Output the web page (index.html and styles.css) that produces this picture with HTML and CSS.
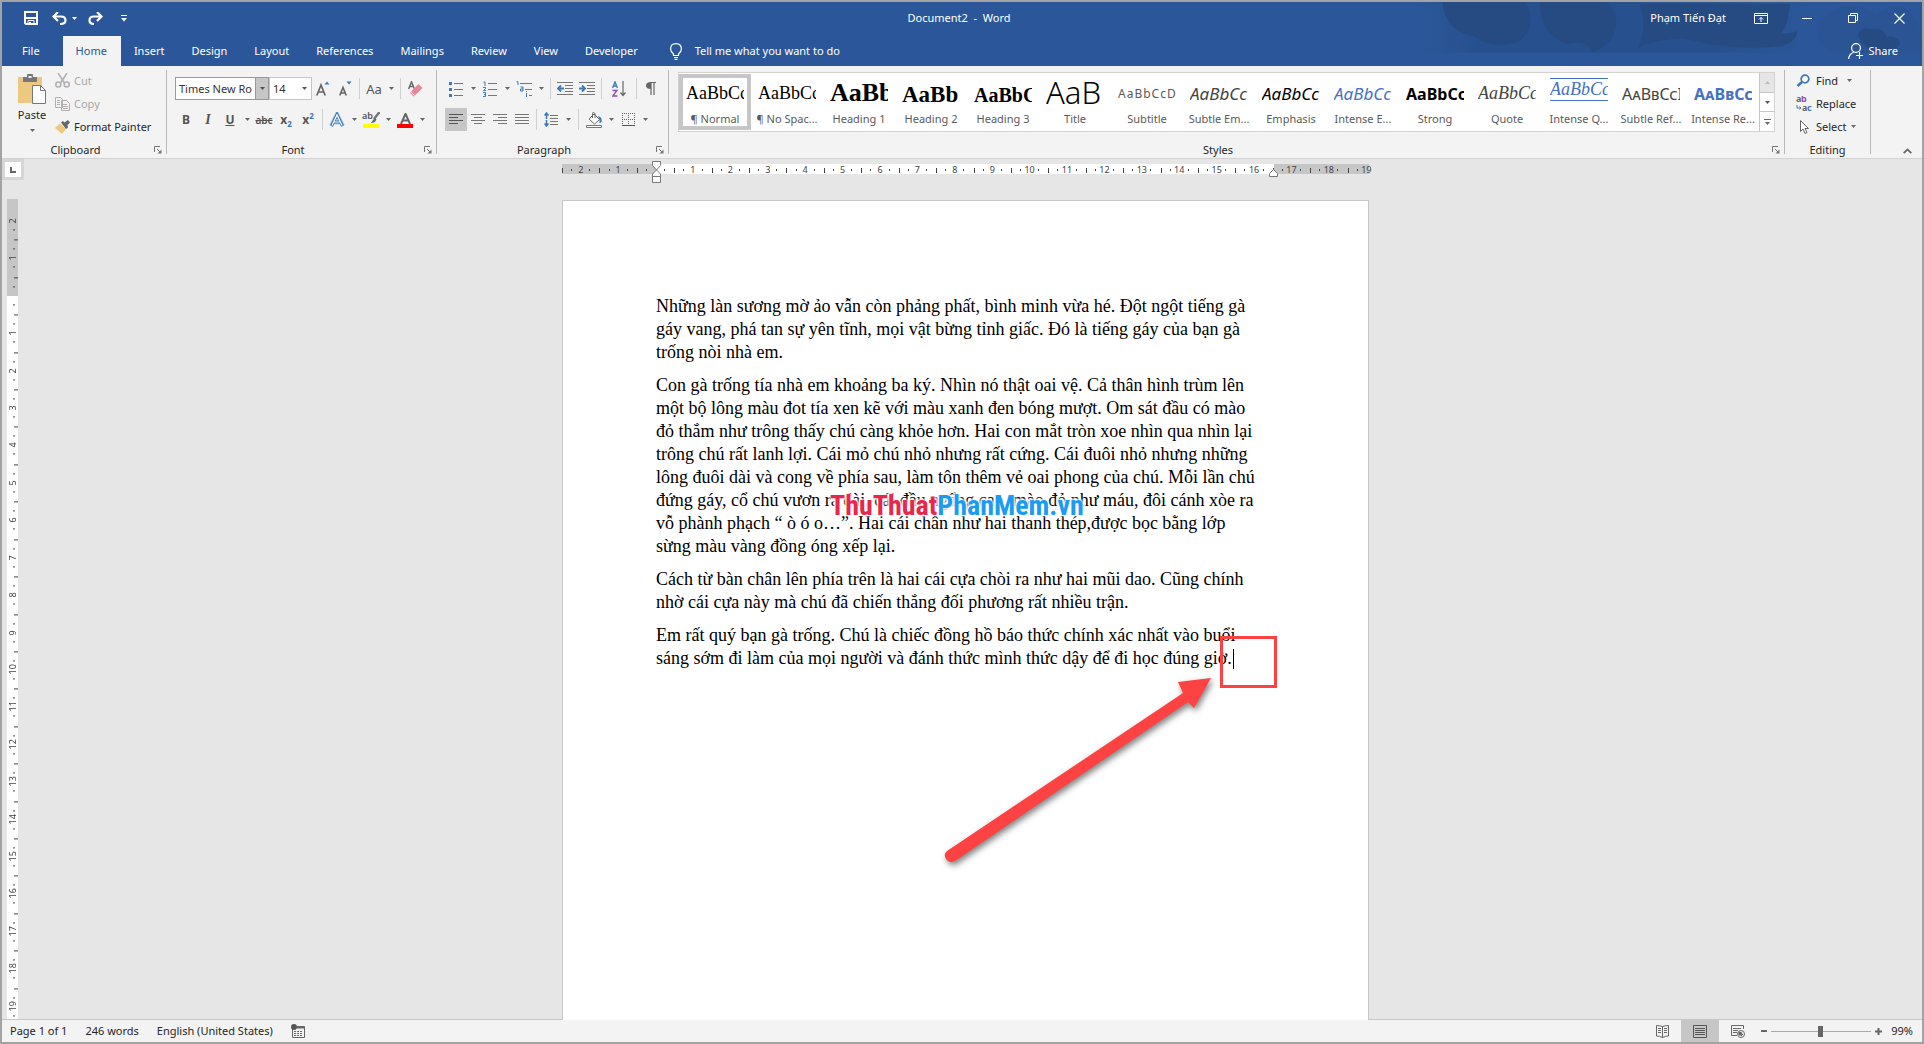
FILE: index.html
```html
<!DOCTYPE html>
<html lang="en">
<head>
<meta charset="utf-8">
<title>Document2 - Word</title>
<link rel="stylesheet" href="styles.css">
</head>
<body>
<svg class="defs" aria-hidden="true">
  <symbol id="caret" viewBox="0 0 5 3"><path d="M0 0h5L2.5 3z" fill="currentColor"/></symbol>
  <symbol id="launch" viewBox="0 0 8 8"><path d="M.5 6V.5H6" fill="none" stroke="#777"/><path d="M3 3l3 3" stroke="#777"/><path d="M7.500 3.500v4h-4z" fill="#777"/></symbol>
</svg>
<div class="window">
  <header class="top">
    <svg class="clouds" viewBox="0 0 524 51" aria-hidden="true">
      <defs><linearGradient id="fade"><stop offset="0" stop-color="#27508e" stop-opacity="0"/><stop offset=".15" stop-color="#27508e"/><stop offset=".75" stop-color="#27508e"/><stop offset="1" stop-color="#27508e" stop-opacity="0"/></linearGradient></defs>
      <path d="M20 0h390v51H20z" fill="url(#fade)"/>
      <g fill="#264a82">
        <path d="M44 0h84q12 26-8 40q-26 8-44-6q-28-4-32-34z"/>
        <path d="M142 0h66q14 10 9 28q-5 17-23 22q-6-14-24-8q-28-8-28-42z"/>
        <path d="M242 2h150q-2 24-10 30q10 0 17-3q2 8-14 15q-50 6-100-8q-30 2-45 10q10-20 2-44z"/>
      </g>
      <path d="M432 10q24-14 46 4q18-16 34-4q12 12 12 41h-92q-26-24 0-41z" fill="#2a5494"/>
      <path d="M474 49q-14-8-14-17q4-8 14-5q12-2 15 8q10-2 13 6q-4 12-28 8z" fill="#264a82"/>
    </svg>
    <div class="titlebar">
      <div class="quick">
        <button aria-label="Save"><svg width="14" height="14" viewBox="0 0 14 14"><path d="M1 1h12v12H2l-1-1z" fill="none" stroke="#fff" stroke-width="2"/><path d="M2 7h10" stroke="#fff" stroke-width="2"/><path d="M4 13V9.500h6V13" fill="none" stroke="#fff"/><path d="M5 11h2v2H5z" fill="#fff"/></svg></button>
        <button aria-label="Undo"><svg width="15" height="13" viewBox="0 0 15 13"><path d="M6 0L1.500 4.500L6 9M2 4.500h7q4.500 0 4.500 4q0 3.500-5.500 3.500" fill="none" stroke="#fff" stroke-width="2.200"/></svg></button>
        <button class="arrow" aria-label="Undo list"><svg width="5" height="3"><use href="#caret"/></svg></button>
        <button aria-label="Redo"><svg width="15" height="13" viewBox="0 0 15 13"><path d="M9 0l4.500 4.500L9 9M13 4.500H6Q1.500 4.500 1.500 8.500Q1.500 12 6 12" fill="none" stroke="#fff" stroke-width="2.200"/></svg></button>
        <button aria-label="Customize Quick Access Toolbar"><svg width="6" height="7" viewBox="0 0 6 7"><path d="M0 .5h6" stroke="#fff"/><path d="M0 3h6L3 6.500z" fill="#fff"/></svg></button>
      </div>
      <h1 class="caption">Document2&nbsp; -&nbsp; Word</h1>
      <div class="controls">
        <span class="user">Phạm Tiến Đạt</span>
        <button aria-label="Ribbon Display Options"><svg width="14" height="11" viewBox="0 0 14 11"><path d="M.5.500h13v10H.5zM.5 2.500h13M7 9V4.500M5 6.500L7 4.500L9 6.500" fill="none" stroke="#fff"/></svg></button>
        <button aria-label="Minimize"><svg width="10" height="10" viewBox="0 0 10 10"><path d="M0 5.500h10" stroke="#fff"/></svg></button>
        <button aria-label="Restore"><svg width="10" height="10" viewBox="0 0 10 10"><path d="M.5 2.500h7v7h-7zM2.500 2.500v-2h7v7h-2" fill="none" stroke="#fff"/></svg></button>
        <button aria-label="Close"><svg width="11" height="11" viewBox="0 0 11 11"><path d="M.5.500l10 10M10.500.500l-10 10" stroke="#fff" stroke-width="1.200"/></svg></button>
      </div>
    </div>
    <nav class="tabs">
      <a class="file" href="#">File</a>
      <a class="active" href="#">Home</a>
      <a href="#">Insert</a>
      <a href="#">Design</a>
      <a href="#">Layout</a>
      <a href="#">References</a>
      <a href="#">Mailings</a>
      <a href="#">Review</a>
      <a href="#">View</a>
      <a href="#">Developer</a>
      <button class="tell"><svg width="12" height="17" viewBox="0 0 12 17"><path d="M3.500 12.500V11Q.600 8.800.600 6Q.600.600 6 .600T11.400 6Q11.400 8.800 8.500 11v1.500zM4 14.500h4M4.500 16.300h3" fill="none" stroke="#fff" stroke-width="1.200"/></svg>Tell me what you want to do</button>
      <button class="share"><svg width="15" height="17" viewBox="0 0 15 17"><circle cx="8" cy="5" r="4.400" fill="none" stroke="#fff" stroke-width="1.200"/><path d="M.6 16q.4-5 5-6.800M11.500 9v7M8 12.500h7" fill="none" stroke="#fff" stroke-width="1.200"/></svg>Share</button>
    </nav>
  </header>

  <div class="ribbon">
    <section class="group">
      <div class="body clip">
        <button class="paste">
          <svg width="28" height="31" viewBox="0 0 28 31"><path d="M0 3h24v26H0z" fill="#ecc880"/><path d="M5 3h4V1q0-1 1-1h4q1 0 1 1v2h4v5H5z" fill="#777"/><path d="M10.500 2h3v2h-3z" fill="#f3f3f3"/><path d="M14.500 11.500h8l5 5v13h-13z" fill="#fff" stroke="#777"/><path d="M22.500 11.500v5h5" fill="none" stroke="#777"/></svg>
          <span>Paste</span>
          <svg width="5" height="3"><use href="#caret"/></svg>
        </button>
        <div class="rows">
          <button class="off"><svg width="15" height="15" viewBox="0 0 15 15"><g fill="none" stroke="#b3afb3" stroke-width="1.600"><path d="M3 0l6.500 10M12 0L5.500 10"/><circle cx="3.300" cy="11.500" r="2.500"/><circle cx="11.700" cy="11.500" r="2.500"/></g></svg>Cut</button>
          <button class="off"><svg width="15" height="14" viewBox="0 0 15 14"><path d="M.5.500h5l2 2v8h-7z M6.500 3.500h5l3 3v7h-8z" fill="#f3f3f3" stroke="#b3afb3"/><path d="M2 3.500h3M2 5.500h3M2 7.500h3M8 7.500h4M8 9.500h5M8 11.500h5" stroke="#b3afb3"/></svg>Copy</button>
          <button><svg width="15" height="14" viewBox="0 0 15 14"><path d="M5 3.500l6 5.500l-4 5L0 8z" fill="#ecc880"/><path d="M6 2.500l2-1.500l1.500 1.500L13 0l2 2.500L12.500 5L13 7.500l-2 1.500z" fill="#666"/></svg>Format Painter</button>
        </div>
      </div>
      <div class="label"><span>Clipboard</span><button aria-label="Clipboard settings"><svg width="8" height="8"><use href="#launch"/></svg></button></div>
    </section>

    <section class="group">
      <div class="body stack">
        <div class="tools">
          <div class="combo name"><input type="text" value="Times New Ro" aria-label="Font"><button aria-label="Font list"><svg width="5" height="3"><use href="#caret"/></svg></button></div>
          <div class="combo size"><input type="text" value="14" aria-label="Font size"><button aria-label="Size list"><svg width="5" height="3"><use href="#caret"/></svg></button></div>
          <button class="t" aria-label="Grow font"><svg width="14" height="16" viewBox="0 0 14 16"><path d="M.8 14.500L5 4l4.200 10.500M2.300 11h5.500" fill="none" stroke="#666" stroke-width="1.700"/><path d="M8.500 3.500h5L11 .5z" fill="#3e79b5"/></svg></button>
          <button class="t" aria-label="Shrink font"><svg width="14" height="16" viewBox="0 0 14 16"><path d="M1.800 14.500L5 6.500l3.200 8M2.800 12h4.400" fill="none" stroke="#666" stroke-width="1.600"/><path d="M8.500.500h5L11 3.500z" fill="#3e79b5"/></svg></button>
          <i class="sep"></i>
          <button class="t case" aria-label="Change case">Aa</button><button class="arrow" aria-label="Case options"><svg width="5" height="3"><use href="#caret"/></svg></button>
          <i class="sep"></i>
          <button class="t" aria-label="Clear formatting"><svg width="15" height="16" viewBox="0 0 15 16"><path d="M.6 8L3.500.800L6.400 8M1.600 5.500h3.800" fill="none" stroke="#666" stroke-width="1.400"/><path d="M10.500 3l4 4L7 14.500l-4-4z" fill="#e8899b"/><path d="M2.500 11l4 4-1 .5L2 12z" fill="#e8899b"/></svg></button>
        </div>
        <div class="tools">
          <button class="t"><b>B</b></button>
          <button class="t ital"><i>I</i></button>
          <button class="t under"><u>U</u></button>
          <button class="arrow" aria-label="Underline styles"><svg width="5" height="3"><use href="#caret"/></svg></button>
          <button class="t strike"><s>abc</s></button>
          <button class="t script"><b>x</b><sub>2</sub></button>
          <button class="t script"><b>x</b><sup>2</sup></button>
          <i class="sep"></i>
          <button class="t" aria-label="Text effects"><svg width="16" height="16" viewBox="0 0 16 16"><path d="M2 14L8 2l6 12M4.500 10.500h7" fill="none" stroke="#a9c8e6" stroke-width="4"/><path d="M2.500 14L8 2.500L13.500 14M5 10h6" fill="none" stroke="#3e79b5" stroke-width="3"/><path d="M3 13.500L8 3l5 10.500M5 10h6" fill="none" stroke="#fff" stroke-width="1.200"/></svg></button>
          <button class="arrow" aria-label="Effects list"><svg width="5" height="3"><use href="#caret"/></svg></button>
          <button class="t bar yellow" aria-label="Highlight"><span class="ab">ab</span><svg width="9" height="12" viewBox="0 0 9 12"><path d="M8.500 0L3 7" stroke="#777" stroke-width="2.400"/><path d="M3.500 6l2 1.500Q4 11 0 11z" fill="#666"/></svg></button>
          <button class="arrow" aria-label="Highlight colours"><svg width="5" height="3"><use href="#caret"/></svg></button>
          <button class="t bar red" aria-label="Font colour"><svg width="11" height="11" viewBox="0 0 11 11"><path d="M1 11L5.500.800L10 11M2.800 7.500h5.400" fill="none" stroke="#666" stroke-width="2"/></svg></button>
          <button class="arrow" aria-label="Font colours"><svg width="5" height="3"><use href="#caret"/></svg></button>
        </div>
      </div>
      <div class="label"><span>Font</span><button aria-label="Font settings"><svg width="8" height="8"><use href="#launch"/></svg></button></div>
    </section>

    <section class="group">
      <div class="body stack tight">
        <div class="tools">
          <button class="t" aria-label="Bullets"><svg width="14" height="16" viewBox="0 0 14 16"><path d="M0 1h3v3H0zM0 7h3v3H0zM0 13h3v3H0z" fill="#3e79b5"/><path d="M5 2.500h9M5 8.500h9M5 14.500h9" stroke="#777"/></svg></button>
          <button class="arrow" aria-label="Bullet styles"><svg width="5" height="3"><use href="#caret"/></svg></button>
          <button class="t" aria-label="Numbering"><svg width="14" height="16" viewBox="0 0 14 16"><path d="M.5 1H2v4M0 6.500h2.500v1.200L.5 9.500h2.500M0 11.500h2.500v4H0M1 13.500h1.500" fill="none" stroke="#3e79b5"/><path d="M5 2.500h9M5 8.500h9M5 14.500h9" stroke="#777"/></svg></button>
          <button class="arrow" aria-label="Number styles"><svg width="5" height="3"><use href="#caret"/></svg></button>
          <button class="t" aria-label="Multilevel list"><svg width="16" height="16" viewBox="0 0 16 16"><path d="M.5.800H2V4M4.500 6H7v4H4.500V8H7M10.500 12v4M10.500 10v1" fill="none" stroke="#3e79b5"/><path d="M4 2.500h12M9 8.500h7M13 14.500h3" stroke="#777"/></svg></button>
          <button class="arrow" aria-label="List levels"><svg width="5" height="3"><use href="#caret"/></svg></button>
          <i class="sep"></i>
          <button class="t" aria-label="Decrease indent"><svg width="16" height="14" viewBox="0 0 16 14"><path d="M0 .5h16M8 3.500h8M8 6.500h8M8 9.500h8M0 12.500h16" stroke="#777"/><path d="M7 6.500H1M4 3.500L1 6.500l3 3" fill="none" stroke="#3e79b5" stroke-width="1.800"/></svg></button>
          <button class="t" aria-label="Increase indent"><svg width="16" height="14" viewBox="0 0 16 14"><path d="M0 .5h16M8 3.500h8M8 6.500h8M8 9.500h8M0 12.500h16" stroke="#777"/><path d="M0 6.500h6M3 3.500l3 3-3 3" fill="none" stroke="#3e79b5" stroke-width="1.800"/></svg></button>
          <i class="sep"></i>
          <button class="t wide" aria-label="Sort"><svg width="14" height="16" viewBox="0 0 14 16"><path d="M.6 7L3 .800L5.400 7M1.500 5h3" fill="none" stroke="#3e79b5" stroke-width="1.300"/><path d="M.5 9.500h4.500L.8 15h4.600" fill="none" stroke="#8a4fb0" stroke-width="1.300"/><path d="M11 0v14M8.500 11.500L11 14.500l2.500-3" fill="none" stroke="#666" stroke-width="1.200"/></svg></button>
          <i class="sep"></i>
          <button class="t" aria-label="Show paragraph marks"><svg width="10" height="13" viewBox="0 0 10 13"><path d="M4 .5h6M5 1v12M8 1v12" fill="none" stroke="#666" stroke-width="1.200"/><path d="M5 0v7Q0 7 0 3.500T5 0z" fill="#666"/></svg></button>
        </div>
        <div class="tools">
          <button class="t on" aria-label="Align left"><svg width="14" height="11" viewBox="0 0 14 11"><path d="M0 .5h14M0 3.500h9M0 6.500h14M0 9.500h9" stroke="#555"/></svg></button>
          <button class="t" aria-label="Centre"><svg width="14" height="11" viewBox="0 0 14 11"><path d="M0 .5h14M3 3.500h8M0 6.500h14M3 9.500h8" stroke="#777"/></svg></button>
          <button class="t" aria-label="Align right"><svg width="14" height="11" viewBox="0 0 14 11"><path d="M0 .5h14M5 3.500h9M0 6.500h14M5 9.500h9" stroke="#777"/></svg></button>
          <button class="t" aria-label="Justify"><svg width="14" height="11" viewBox="0 0 14 11"><path d="M0 .5h14M0 3.500h14M0 6.500h14M0 9.500h14" stroke="#777"/></svg></button>
          <i class="sep"></i>
          <button class="t" aria-label="Line spacing"><svg width="14" height="15" viewBox="0 0 14 15"><path d="M2.500 1v13M.5 3.500l2-2.500 2 2.500M.5 11.500l2 2.500 2-2.500" fill="none" stroke="#3e79b5" stroke-width="1.500"/><path d="M0 7.500h5" stroke="#f3f3f3"/><path d="M6 3.500h8M6 6.500h8M6 9.500h8M6 12.500h8" stroke="#777"/></svg></button>
          <button class="arrow" aria-label="Spacing options"><svg width="5" height="3"><use href="#caret"/></svg></button>
          <i class="sep end"></i>
          <button class="t" aria-label="Shading"><svg width="17" height="16" viewBox="0 0 17 16"><path d="M8 2l5.500 5.500L8.500 12L3 7z" fill="#fff" stroke="#666"/><path d="M6.500 6V1.500Q6.500.500 7.500.500T9 2v4" fill="none" stroke="#666"/><path d="M12 4q4.500 1 3.500 6l-2 1.500V7.500z" fill="#3e79b5"/><path d="M.5 13.500h15v2H.5z" fill="#fff" stroke="#777"/></svg></button>
          <button class="arrow" aria-label="Shading colours"><svg width="5" height="3"><use href="#caret"/></svg></button>
          <button class="t" aria-label="Borders"><svg width="13" height="13" viewBox="0 0 13 13"><path d="M.5 0v12M6.500 0v12M12.500 0v12M0 .5h13M0 6.500h13" fill="none" stroke="#666" stroke-dasharray="1 1"/><path d="M0 12.500h13" stroke="#555"/></svg></button>
          <button class="arrow" aria-label="Border styles"><svg width="5" height="3"><use href="#caret"/></svg></button>
        </div>
      </div>
      <div class="label"><span>Paragraph</span><button aria-label="Paragraph settings"><svg width="8" height="8"><use href="#launch"/></svg></button></div>
    </section>

    <section class="group styles">
      <div class="body">
        <div class="gallery">
          <button class="style on"><span class="p serif">AaBbCc</span><span>¶ Normal</span></button>
          <button class="style"><span class="p serif">AaBbCc</span><span>¶ No Spac...</span></button>
          <button class="style"><span class="p serif h1">AaBb</span><span>Heading 1</span></button>
          <button class="style"><span class="p serif h2">AaBb</span><span>Heading 2</span></button>
          <button class="style"><span class="p serif h3">AaBbC</span><span>Heading 3</span></button>
          <button class="style"><span class="p title">AaB</span><span>Title</span></button>
          <button class="style"><span class="p subtitle">AaBbCcD</span><span>Subtitle</span></button>
          <button class="style"><span class="p em grey">AaBbCc</span><span>Subtle Em...</span></button>
          <button class="style"><span class="p em">AaBbCc</span><span>Emphasis</span></button>
          <button class="style"><span class="p em blue">AaBbCc</span><span>Intense E...</span></button>
          <button class="style"><span class="p strong">AaBbCc</span><span>Strong</span></button>
          <button class="style"><span class="p serif quote grey">AaBbCc</span><span>Quote</span></button>
          <button class="style"><span class="p serif quote blue lined">AaBbCc</span><span>Intense Q...</span></button>
          <button class="style"><span class="p caps grey">AaBbCcI</span><span>Subtle Ref...</span></button>
          <button class="style"><span class="p caps blue heavy">AaBbCc</span><span>Intense Re...</span></button>
          <div class="scroll">
            <button class="dim" aria-label="Previous styles"><svg width="5" height="3" viewBox="0 0 5 3"><path d="M0 3h5L2.500 0z" fill="#bbb"/></svg></button>
            <button aria-label="Next styles"><svg width="5" height="3"><use href="#caret"/></svg></button>
            <button aria-label="All styles"><svg width="7" height="6" viewBox="0 0 7 6"><path d="M0 .5h7" stroke="#666"/><path d="M1 3h5L3.500 6z" fill="#666"/></svg></button>
          </div>
        </div>
      </div>
      <div class="label"><span>Styles</span><button aria-label="Styles pane"><svg width="8" height="8"><use href="#launch"/></svg></button></div>
    </section>

    <section class="group editing">
      <div class="body rows">
        <button><svg width="16" height="13" viewBox="0 0 16 13"><circle cx="9" cy="5" r="3.800" fill="#fff" stroke="#3e79b5" stroke-width="1.800"/><path d="M6 8l-4.500 4" stroke="#3e79b5" stroke-width="2.500"/></svg>Find <svg class="gap" width="5" height="3"><use href="#caret"/></svg></button>
        <button><svg class="swap" width="16" height="15" viewBox="0 0 16 15"><g font-size="9" font-weight="700"><text x="0" y="6" fill="#666">a</text><text x="5" y="6" fill="#8a4fb0">b</text><text x="6" y="15" fill="#666">a</text><text x="11" y="15" fill="#3e79b5">c</text></g><path d="M1 9v3h4M3.500 10.500L5 12l-1.500 1.500" fill="none" stroke="#3e79b5"/></svg>Replace</button>
        <button><svg width="16" height="14" viewBox="0 0 16 14"><path d="M4.500.500v11l2.500-2.500 2 4.500 2-1-2-4h3.500z" fill="#fff" stroke="#666"/></svg>Select<svg width="5" height="3"><use href="#caret"/></svg></button>
      </div>
      <div class="label"><span>Editing</span></div>
    </section>
    <button class="collapse" aria-label="Collapse the ribbon"><svg width="9" height="6" viewBox="0 0 9 6"><path d="M.7 5.200L4.500 1.400l3.800 3.800" fill="none" stroke="#666" stroke-width="1.800"/></svg></button>
  </div>

  <main class="work">
    <div class="side">
      <button class="tabstop" aria-label="Tab selector"><svg width="6" height="6" viewBox="0 0 6 6"><path d="M1 0v5h5" fill="none" stroke="#666" stroke-width="2"/></svg></button>
      <div class="vruler"><div class="scale">
        <span>2</span><span>1</span><span></span><span>1</span><span>2</span><span>3</span><span>4</span><span>5</span><span>6</span><span>7</span><span>8</span><span>9</span><span>10</span><span>11</span><span>12</span><span>13</span><span>14</span><span>15</span><span>16</span><span>17</span><span>18</span><span>19</span>
      </div></div>
    </div>
    <div class="canvas">
      <div class="hruler"><div class="scale">
        <span>2</span><span>1</span><span></span><span>1</span><span>2</span><span>3</span><span>4</span><span>5</span><span>6</span><span>7</span><span>8</span><span>9</span><span>10</span><span>11</span><span>12</span><span>13</span><span>14</span><span>15</span><span>16</span><span>17</span><span>18</span><span>19</span>
      </div>
        <svg class="mark left" width="9" height="22" viewBox="0 0 9 22"><path d="M.5.500h8v4L4.500 9l4 4v2.500h-8V13l4-4L.5 4.500zM.5 15.500h8v6h-8z" fill="#fff" stroke="#777"/></svg>
        <svg class="mark right" width="9" height="8" viewBox="0 0 9 8"><path d="M.5 7.500V4.500l4-4 4 4v3z" fill="#fff" stroke="#777"/></svg>
      </div>
      <article class="page" lang="vi">
        <p>Những làn sương mờ ảo vẫn còn phảng phất, bình minh vừa hé. Đột ngột tiếng gà<br>gáy vang, phá tan sự yên tĩnh, mọi vật bừng tỉnh giấc. Đó là tiếng gáy của bạn gà<br>trống nòi nhà em.</p>
        <p>Con gà trống tía nhà em khoảng ba ký. Nhìn nó thật oai vệ. Cả thân hình trùm lên<br>một bộ lông màu đot tía xen kẽ với màu xanh đen bóng mượt. Om sát đầu có mào<br>đỏ thắm như trông thấy chú càng khỏe hơn. Hai con mắt tròn xoe nhìn qua nhìn lại<br>trông chú rất lanh lợi. Cái mỏ chú nhỏ nhưng rất cứng. Cái đuôi nhỏ nhưng những<br>lông đuôi dài và cong về phía sau, làm tôn thêm vẻ oai phong của chú. Mỗi lần chú<br>đứng gáy, cổ chú vươn ra dài, cái đầu ngẩng cao, mào đỏ như máu, đôi cánh xòe ra<br>vỗ phành phạch “ ò ó o…”. Hai cái chân như hai thanh thép,được bọc bằng lớp<br>sừng màu vàng đồng óng xếp lại.</p>
        <p>Cách từ bàn chân lên phía trên là hai cái cựa chòi ra như hai mũi dao. Cũng chính<br>nhờ cái cựa này mà chú đã chiến thắng đối phương rất nhiều trận.</p>
        <p>Em rất quý bạn gà trống. Chú là chiếc đồng hồ báo thức chính xác nhất vào buổi<br>sáng sớm đi làm của mọi người và đánh thức mình thức dậy để đi học đúng giờ.<span class="cursor"></span></p>
        <div class="watermark"><span>ThuThuat</span><span>PhanMem.vn</span></div>
        <div class="callout"></div>
        <svg class="pointer" width="290" height="210" viewBox="0 0 290 210" aria-hidden="true"><path d="M5 184L241 26L236 15L269 11L252 41L246 35L13 194Q7 197 4 192T5 184z" fill="#fd4243"/></svg>
      </article>
    </div>
  </main>

  <footer class="status">
    <span>Page 1 of 1</span><span>246 words</span><span>English (United States)</span>
    <svg width="14" height="14" viewBox="0 0 14 14"><path d="M1.500 5v8.500h12v-11H6" fill="none" stroke="#666"/><path d="M6 2.500h7.500v2H6z" fill="#666"/><circle cx="3" cy="3" r="3" fill="#555"/><path d="M3 7.500h9M3 9.500h9M3 11.500h9" stroke="#666" stroke-dasharray="2 1"/></svg>
    <div class="views">
      <button aria-label="Read mode"><svg width="13" height="13" viewBox="0 0 13 13"><path d="M6.500 1.500Q3.500.500.500.500v10.500q3 0 6 1.500q3-1.500 6-1.500V.500Q9.500.500 6.500 1.500zV13M2 3.500h3M2 5.500h3M2 7.500h3M8 3.500h3M8 5.500h3M8 7.500h3" fill="none" stroke="#666"/></svg></button>
      <button class="on" aria-label="Print layout"><svg width="14" height="13" viewBox="0 0 14 13"><path d="M.5.500h13v12H.5zM2 3.500h10M2 5.500h10M2 7.500h10M2 9.500h10" fill="none" stroke="#555"/></svg></button>
      <button aria-label="Web layout"><svg width="14" height="13" viewBox="0 0 14 13"><path d="M6 10.500H.5V.500h12V4M2 3.500h8M2 5.500h5M2 7.500h4" fill="none" stroke="#666"/><circle cx="10" cy="9" r="3.500" fill="#f3f3f3" stroke="#666"/><path d="M8 7l3 1-1 2-2 0zM10 11l2-2" fill="#666" stroke="#666"/></svg></button>
      <button class="zoom" aria-label="Zoom out"><svg width="6" height="6" viewBox="0 0 6 6"><path d="M0 3h6" stroke="#666" stroke-width="2"/></svg></button>
      <input type="range" min="0" max="100" value="49" aria-label="Zoom">
      <button class="zoom" aria-label="Zoom in"><svg width="7" height="7" viewBox="0 0 7 7"><path d="M0 3.500h7M3.500 0v7" stroke="#666" stroke-width="2"/></svg></button>
      <span class="percent">99%</span>
    </div>
  </footer>
</div>
</body>
</html>
```
FILE: styles.css
```css
* { box-sizing: border-box; }
body { margin: 0; font: 11px/16px "Noto Sans", "Open Sans", sans-serif; color: #262626; }
button { margin: 0; padding: 0; border: 0; background: none; font: inherit; color: inherit; display: flex; align-items: center; justify-content: center; }
svg { flex: none; display: block; }
.defs { position: absolute; width: 0; height: 0; }
.window { height: 100vh; min-height: 600px; display: flex; flex-direction: column; border: 2px solid #a3a3a3; background: #e6e6e6; overflow: hidden; }

/* Title bar and tabs */
.top { position: relative; flex: none; background: #2b579a; color: #fff; }
.clouds { position: absolute; top: 0; right: 0; width: 524px; height: 51px; }
.titlebar { position: relative; display: grid; grid-template-columns: 1fr auto 1fr; height: 34px; padding-bottom: 2px; align-items: center; }
.quick { display: flex; align-items: center; padding-left: 22px; }
.quick button { margin-right: 14px; }
.quick button:nth-child(2) { margin-right: 5px; }
.quick button:nth-child(3) { width: 5px; margin-right: 11px; }
.quick button:nth-child(4) { margin-right: 18px; }
.quick .arrow { color: #fff; }
.caption { margin: 0; padding-right: 6px; font-size: 11px; font-weight: 400; }
.controls { display: flex; justify-content: flex-end; align-items: center; }
.controls button { width: 46px; height: 30px; }
.user { margin-right: 12px; }
.tabs { position: relative; display: flex; height: 30px; }
.tabs a { display: flex; align-items: center; padding: 0 14px 0 13px; color: #fff; text-decoration: none; }
.tabs .file { padding: 0 23px 0 20px; }
.tabs .active { background: #f3f3f3; color: #2b579a; }
.tell { margin-left: 18px; gap: 13px; }
.share { margin-left: auto; margin-right: 24px; gap: 5px; }

/* Ribbon */
.ribbon { flex: none; display: flex; height: 93px; background: #f3f3f3; border-bottom: 1px solid #d2d2d2; }
.group { flex: none; display: flex; flex-direction: column; position: relative; padding-right: 1px; background: linear-gradient(#b8b8b8, #b8b8b8) no-repeat right 4px / 1px 84px; }
.body { flex: 1; display: flex; }
.label { height: 16px; display: flex; align-items: center; }
.label span { flex: 1; text-align: center; }
.label button { width: 17px; }
.clip { width: 164px; padding-left: 15px; }
.paste { width: 30px; flex-direction: column; justify-content: flex-start; padding-top: 8px; gap: 2px; }
.paste svg:last-child { margin-top: 4px; color: #666; }
.rows { display: flex; flex-direction: column; padding-top: 3px; }
.clip .rows { margin-left: 8px; }
.rows button { height: 23px; gap: 4px; justify-content: flex-start; }
.off { color: #a8a8a8; }
.stack { flex-direction: column; padding: 11px 8px 0; gap: 8px; }
.stack.tight { padding-right: 6px; }
.tools { display: flex; height: 23px; color: #555; }
.t { width: 22px; }
.t.wide { width: 28px; }
.arrow { width: 12px; color: #666; }
.sep { width: 7px; margin: 1px 0; background: linear-gradient(#d0d0d0, #d0d0d0) no-repeat center / 1px 100%; }
.sep.end { width: 9px; }
.on { background: #c6c6c6; }
.combo { display: flex; background: #fff; border: 1px solid #c6c6c6; }
.combo input { flex: 1; min-width: 0; border: 0; padding: 0 3px; background: none; font: 11px/21px "Noto Sans", sans-serif; color: #333; }
.combo button { width: 13px; color: #555; }
.name { width: 94px; border-color: #999; }
.name button { background: #c6c6c6; border-left: 1px solid #999; }
.size { width: 43px; }
.size button { width: 14px; }
.case { font-size: 13px; }
.tools b { font-size: 12px; }
.ital { font: 14px/16px "Liberation Serif", serif; font-weight: 700; }
.under { font-size: 12px; font-weight: 700; }
.strike { font-size: 10px; font-weight: 600; }
.script sub, .script sup { font-size: 8px; line-height: 8px; color: #3e79b5; font-weight: 700; }
.script sub { align-self: flex-end; padding-bottom: 3px; }
.script sup { align-self: flex-start; padding-top: 4px; }
.bar { padding-bottom: 3px; background: no-repeat center 16px / 16px 4px; }
.ab { font-size: 9px; font-weight: 600; margin-right: -2px; align-self: flex-start; }
.yellow { background-image: linear-gradient(#ff0, #ff0); }
.red { background-image: linear-gradient(#f00, #f00); }

.gallery { display: flex; height: 60px; margin: 6px 9px 0; border: 1px solid #d2d2d2; background: #fff; }
.style { width: 72px; height: 56px; margin-top: 1px; padding: 0 7px; flex-direction: column; justify-content: flex-start; color: #5a5a5a; white-space: nowrap; }
.style.on { background: #fff; box-shadow: inset 0 0 0 4px #c6c6c6; }
.p { width: 58px; height: 28px; margin: 5px 0 4px; overflow: hidden; text-align: left; font: 16px/30px "Noto Sans", sans-serif; color: #000; }
.p.serif { font: 18px/28px "Liberation Serif", serif; }
.p.h1 { font-size: 26px; font-weight: 700; }
.p.h2 { font-size: 23px; line-height: 32px; font-weight: 700; }
.p.h3 { font-size: 20px; line-height: 32px; font-weight: 700; }
.p.title { font-size: 31px; line-height: 26px; font-weight: 300; }
.p.subtitle { font-size: 12px; color: #5a5a5a; letter-spacing: 1px; }
.p.em { font-size: 17px; font-style: italic; }
.p.strong, .p.heavy { font-weight: 700; }
.p.quote { font-style: italic; }
.p.caps { font-variant: small-caps; }
.p.grey { color: #444; }
.p.blue { color: #4472c4; }
.p.lined { height: 23px; margin: 4px 0 10px; border: 1px solid #4472c4; border-width: 1px 0; line-height: 21px; }
.scroll { display: flex; flex-direction: column; width: 15px; border-left: 1px solid #c6c6c6; color: #555; }
.scroll button { flex: 1; }
.scroll button + button { border-top: 1px solid #c6c6c6; }
.dim { background: #e6e6e6; }
.editing { width: 86px; padding-left: 11px; }
.editing .label { margin-left: -11px; }
.editing .gap { margin-left: 5px; }
.editing svg { color: #666; }
.swap { font-family: "Noto Sans", sans-serif; }
.collapse { margin: auto 10px 4px auto; }

/* Workspace */
.work { flex: 1; min-height: 0; display: flex; }
.side { width: 22px; display: flex; flex-direction: column; }
.tabstop { height: 21px; width: 22px; margin-bottom: 19px; border: 3px solid #d6d6d6; background: #fff; }
.vruler { flex: 1; min-height: 0; width: 11px; margin-left: 5px; overflow: hidden; background: linear-gradient(#c6c6c6 97px, #fff 97px); }
.vruler .scale { height: 823px; margin-top: 3px; display: grid; grid-template-rows: repeat(22, 1fr); }
.scale span { display: flex; align-items: center; justify-content: center; font-size: 9px; line-height: 12px; color: #444; }
.vruler span { writing-mode: vertical-rl; transform: rotate(180deg); background:
  linear-gradient(#444, #444) no-repeat 0 100% / 5px 1px,
  linear-gradient(#444, #444) no-repeat 4px 25% / 2px 1px,
  linear-gradient(#444, #444) no-repeat 4px 75% / 2px 1px; }
.vruler span:first-child { background: linear-gradient(#444, #444) no-repeat 4px 25% / 2px 1px; }
.canvas { flex: 1; min-width: 0; display: flex; flex-direction: column; align-items: center; padding-right: 15px; }
.hruler { position: relative; width: 807px; height: 10px; margin: 5px 0 26px; background: linear-gradient(90deg, #c6c6c6 95px, #fff 95px 712px, #c6c6c6 712px); }
.hruler .scale { width: 823px; display: grid; grid-template-columns: repeat(22, 1fr); }
.hruler span { height: 10px; padding-top: 1px; background:
  linear-gradient(#444, #444) no-repeat 0 4px / 1px 5px,
  linear-gradient(#444, #444) no-repeat 25% 5px / 1px 2px,
  linear-gradient(#444, #444) no-repeat 75% 5px / 1px 2px; }
.hruler span:last-child { background:
  linear-gradient(#444, #444) no-repeat 0 4px / 1px 5px,
  linear-gradient(#444, #444) no-repeat 25% 5px / 1px 2px; }
.mark { position: absolute; }
.mark.left { left: 90px; top: -3px; }
.mark.right { left: 707px; top: 5px; }
.page { position: relative; flex: 1; width: 807px; padding: 94px 94px 0 93px; border: 1px solid #c6c6c6; border-bottom: 0; background: #fff; font: 18px/23px "Liberation Serif", serif; color: #000; white-space: nowrap; }
.page p { margin: 0 0 10px; }
.cursor { display: inline-block; width: 1px; height: 20px; margin-left: 1px; background: #000; vertical-align: -5px; }
.watermark { position: absolute; left: 267px; top: 289px; font: 700 28px/32px "Liberation Sans Narrow", "Roboto Condensed", Roboto, sans-serif; color: #e8274b; text-shadow: 0 0 2px #fff, 0 0 3px #fff, 1px 1px 3px #fff, -1px -1px 3px #fff; }
.watermark span + span { color: #1b9cf0; }
.callout { position: absolute; left: 657px; top: 435px; width: 57px; height: 52px; border: 3px solid #fd4243; }
.pointer { position: absolute; left: 379px; top: 466px; filter: drop-shadow(2px 3px 3px rgba(0, 0, 0, .5)); }

/* Status bar */
.status { flex: none; display: flex; align-items: center; gap: 18px; height: 22px; padding: 0 9px 0 8px; background: #f3f3f3; box-shadow: 0 -1px #c6c6c6; }
.views { margin-left: auto; display: flex; align-items: center; height: 22px; }
.views button { width: 38px; height: 22px; }
.views .zoom { width: 14px; }
.views input { appearance: none; width: 100px; height: 12px; margin: 0; background: linear-gradient(#aaa, #aaa) no-repeat center / 100% 1px; }
.views input::-webkit-slider-thumb { appearance: none; width: 5px; height: 11px; background: #666; }
.percent { margin-left: 6px; }
```
